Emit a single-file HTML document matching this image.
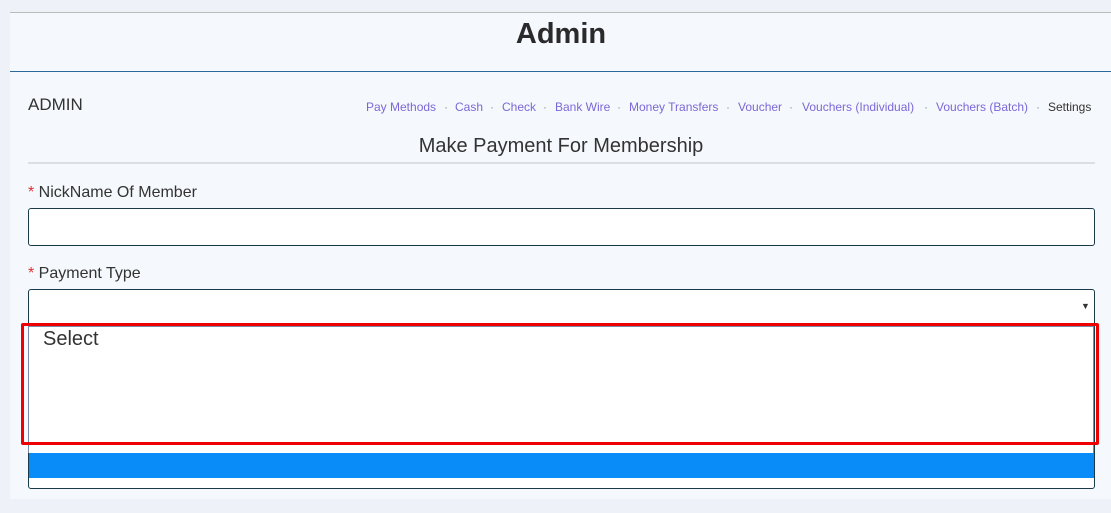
<!DOCTYPE html>
<html><head><style>
body{margin:0;width:1111px;height:513px;background:#eef2f8;font-family:"Liberation Sans",sans-serif;position:relative;overflow:hidden;color:#333}
.panel{position:absolute;left:10px;top:12px;width:1101px;height:486px;background:#f5f8fc;border-top:1px solid #bbb}
.abs{position:absolute;white-space:nowrap}
.nav{top:100px;font-size:12px;color:#7b68d8}
.dot{top:100px;font-size:12px;color:#999}
</style></head><body>
<div class="panel"></div>
<div class="abs" style="left:0;width:1122px;text-align:center;top:18px;font-size:29px;font-weight:bold;color:#2a2a2a">Admin</div>
<div class="abs" style="left:10px;top:71px;width:1101px;height:1px;background:#2a6a9a"></div>
<div class="abs" style="left:28px;top:95px;font-size:17px">ADMIN</div>
<span class="abs nav" style="left:366px">Pay Methods</span><span class="abs dot" style="left:444px">·</span>
<span class="abs nav" style="left:455px">Cash</span><span class="abs dot" style="left:490px">·</span>
<span class="abs nav" style="left:502px">Check</span><span class="abs dot" style="left:543px">·</span>
<span class="abs nav" style="left:555px">Bank Wire</span><span class="abs dot" style="left:617px">·</span>
<span class="abs nav" style="left:629px">Money Transfers</span><span class="abs dot" style="left:726px">·</span>
<span class="abs nav" style="left:738px">Voucher</span><span class="abs dot" style="left:789px">·</span>
<span class="abs nav" style="left:802px">Vouchers (Individual)</span><span class="abs dot" style="left:924px">·</span>
<span class="abs nav" style="left:936px">Vouchers (Batch)</span><span class="abs dot" style="left:1036px">·</span>
<span class="abs nav" style="left:1048px;color:#333">Settings</span>
<div class="abs" style="left:28px;width:1066px;text-align:center;top:135px;font-size:20px">Make Payment For Membership</div>
<div class="abs" style="left:28px;top:162px;width:1067px;height:2px;background:#dcdfe3"></div>
<div class="abs" style="left:28px;top:184px;font-size:16px"><span style="color:#d33">*</span> NickName Of Member</div>
<div class="abs" style="left:28px;top:208px;width:1065px;height:36px;background:#fff;border:1px solid #1a3a4a;border-radius:3px"></div>
<div class="abs" style="left:28px;top:265px;font-size:16px"><span style="color:#d33">*</span> Payment Type</div>
<div class="abs" style="left:28px;top:289px;width:1065px;height:198px;background:#fff;border:1px solid #1a3a4a;border-radius:3px"></div>
<div class="abs" style="left:1081px;top:301px;font-size:9px;color:#333">▼</div>
<div class="abs" style="left:28px;top:326px;width:1065px;height:1px;background:#7a8aa8"></div>
<div class="abs" style="left:28px;top:326px;width:1px;height:127px;background:#7a8aa8"></div>
<div class="abs" style="left:1093px;top:326px;width:1px;height:127px;background:#7a8aa8"></div>
<div class="abs" style="left:29px;top:453px;width:1065px;height:25px;background:#0a8cf8"></div>
<div class="abs" style="left:43px;top:328px;font-size:20px;color:#333">Select</div>
<div class="abs" style="left:21px;top:323px;width:1072px;height:116px;border:3px solid #e00;border-radius:2px"></div>
</body></html>
